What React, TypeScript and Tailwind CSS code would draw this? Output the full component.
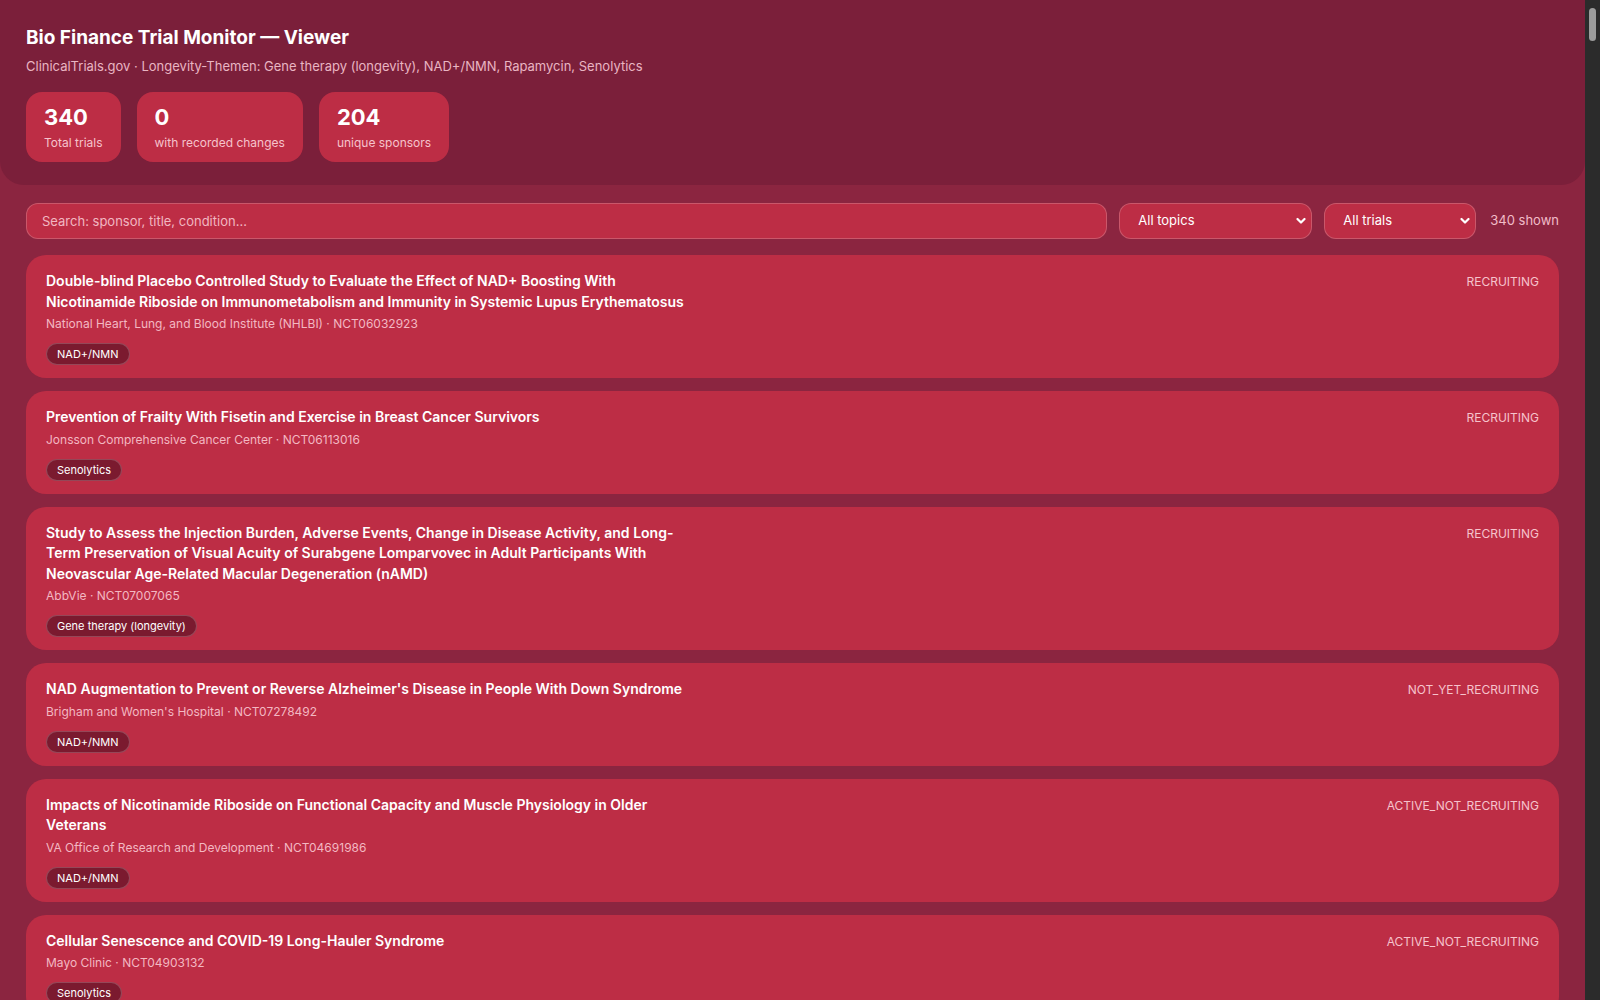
type Trial = {
  title: string
  sponsor: string
  nct: string
  topic: string
  status: string
}

const trials: Trial[] = [
  {
    title:
      "Double-blind Placebo Controlled Study to Evaluate the Effect of NAD+ Boosting With Nicotinamide Riboside on Immunometabolism and Immunity in Systemic Lupus Erythematosus",
    sponsor: "National Heart, Lung, and Blood Institute (NHLBI)",
    nct: "NCT06032923",
    topic: "NAD+/NMN",
    status: "RECRUITING",
  },
  {
    title: "Prevention of Frailty With Fisetin and Exercise in Breast Cancer Survivors",
    sponsor: "Jonsson Comprehensive Cancer Center",
    nct: "NCT06113016",
    topic: "Senolytics",
    status: "RECRUITING",
  },
  {
    title:
      "Study to Assess the Injection Burden, Adverse Events, Change in Disease Activity, and Long-Term Preservation of Visual Acuity of Surabgene Lomparvovec in Adult Participants With Neovascular Age-Related Macular Degeneration (nAMD)",
    sponsor: "AbbVie",
    nct: "NCT07007065",
    topic: "Gene therapy (longevity)",
    status: "RECRUITING",
  },
  {
    title: "NAD Augmentation to Prevent or Reverse Alzheimer's Disease in People With Down Syndrome",
    sponsor: "Brigham and Women's Hospital",
    nct: "NCT07278492",
    topic: "NAD+/NMN",
    status: "NOT_YET_RECRUITING",
  },
  {
    title: "Impacts of Nicotinamide Riboside on Functional Capacity and Muscle Physiology in Older Veterans",
    sponsor: "VA Office of Research and Development",
    nct: "NCT04691986",
    topic: "NAD+/NMN",
    status: "ACTIVE_NOT_RECRUITING",
  },
  {
    title: "Cellular Senescence and COVID-19 Long-Hauler Syndrome",
    sponsor: "Mayo Clinic",
    nct: "NCT04903132",
    topic: "Senolytics",
    status: "ACTIVE_NOT_RECRUITING",
  },
  {
    title: "Rapamycin Treatment for Alzheimer's Disease and Related Dementias: A Pilot Phase 1 Clinical Trial",
    sponsor: "The University of Texas Health Science Center at San Antonio",
    nct: "NCT04629495",
    topic: "Rapamycin",
    status: "COMPLETED",
  },
  {
    title: "Participatory Evaluation (of) Aging (With) Rapamycin (for) Longevity Study",
    sponsor: "AgelessRx",
    nct: "NCT04488601",
    topic: "Rapamycin",
    status: "COMPLETED",
  },
]

const allTrials: Trial[] = Array.from({ length: 340 }, (_, i) => trials[i % trials.length])

function Stat({ value, label }: { value: string; label: string }) {
  return (
    <div className="rounded-2xl bg-[#bd2d45] px-[18px] pt-3 pb-[10px]">
      <div className="text-[22px] leading-[26px] font-bold text-white">{value}</div>
      <div className="mt-1 text-[12px] leading-[18px] text-[#f6c3cc]">{label}</div>
    </div>
  )
}

function Chevron() {
  return (
    <svg
      className="pointer-events-none absolute right-[6px] top-1/2 -translate-y-1/2"
      width="10"
      height="7"
      viewBox="0 0 10 7"
      fill="none"
    >
      <path d="M1.5 1.5 5 5l3.5-3.5" stroke="white" strokeWidth="2.2" strokeLinecap="round" strokeLinejoin="round" />
    </svg>
  )
}

function Select({ value, width, options }: { value: string; width: string; options: string[] }) {
  return (
    <div className={`relative shrink-0 ${width}`}>
      <select
        defaultValue={value}
        className="h-9 w-full appearance-none rounded-xl border border-white/20 bg-[#bd2d45] pl-[18px] pr-6 text-[13px] text-white outline-none"
      >
        {options.map((o) => (
          <option key={o}>{o}</option>
        ))}
      </select>
      <Chevron />
    </div>
  )
}

function TrialCard({ trial }: { trial: Trial }) {
  return (
    <div className="flex justify-between gap-6 rounded-[20px] bg-[#bd2d45] px-5 pt-4 pb-[13px]">
      <div className="max-w-[640px]">
        <h3 className="text-[14px] leading-[20.5px] font-semibold text-white">{trial.title}</h3>
        <div className="mt-1 text-[12px] leading-4 text-[#f3b8c2]">
          {trial.sponsor} · {trial.nct}
        </div>
        <div className="mt-[11px] flex">
          <span className="rounded-full border border-white/20 bg-[#7b1a2f] px-2.5 py-[3px] text-[11px] leading-[14px] text-white">
            {trial.topic}
          </span>
        </div>
      </div>
      <div className="shrink-0 text-[12px] leading-[21px] text-[#f6c3cc]">{trial.status}</div>
    </div>
  )
}

export default function App() {
  return (
    <div className="flex h-screen bg-[#2b2b2b] font-['Inter','Noto_Sans',sans-serif] text-white">
      <div className="min-w-0 flex-1 overflow-y-auto bg-[#8b2540]">
        {/* Header */}
        <header className="rounded-b-3xl bg-[#7b1f3a] px-[26px] pt-6 pb-[23px]">
          <h1 className="text-[19px] leading-7 font-bold">Bio Finance Trial Monitor — Viewer</h1>
          <p className="mt-1 text-[13px] leading-5 text-[#e9b5c2]">
            ClinicalTrials.gov · Longevity-Themen: Gene therapy (longevity), NAD+/NMN, Rapamycin, Senolytics
          </p>
          <div className="mt-4 flex gap-4">
            <Stat value="340" label="Total trials" />
            <Stat value="0" label="with recorded changes" />
            <Stat value="204" label="unique sponsors" />
          </div>
        </header>

        <main className="px-[26px] pt-[18px] pb-8">
          {/* Filters */}
          <div className="mb-4 flex items-center gap-3">
            <input
              type="text"
              placeholder="Search: sponsor, title, condition…"
              className="h-9 min-w-0 flex-1 rounded-xl border border-white/20 bg-[#bd2d45] px-[15px] text-[13px] text-white outline-none placeholder:text-[#f1b7c1]"
            />
            <Select value="All topics" width="w-[193px]" options={["All topics", "Gene therapy (longevity)", "NAD+/NMN", "Rapamycin", "Senolytics"]} />
            <Select value="All trials" width="w-[152px]" options={["All trials", "With changes"]} />
            <span className="shrink-0 pl-[2px] text-[13px] text-[#f1bcc8]">340 shown</span>
          </div>

          {/* Trial list */}
          <div className="flex flex-col gap-[13px]">
            {allTrials.map((t, i) => (
              <TrialCard key={i} trial={t} />
            ))}
          </div>
        </main>
      </div>

      {/* scroll track */}
      <div className="w-[15px] shrink-0 px-[4px] pt-[8px]">
        <div className="h-[33px] rounded-full bg-[#9c9c9c]" />
      </div>
    </div>
  )
}
